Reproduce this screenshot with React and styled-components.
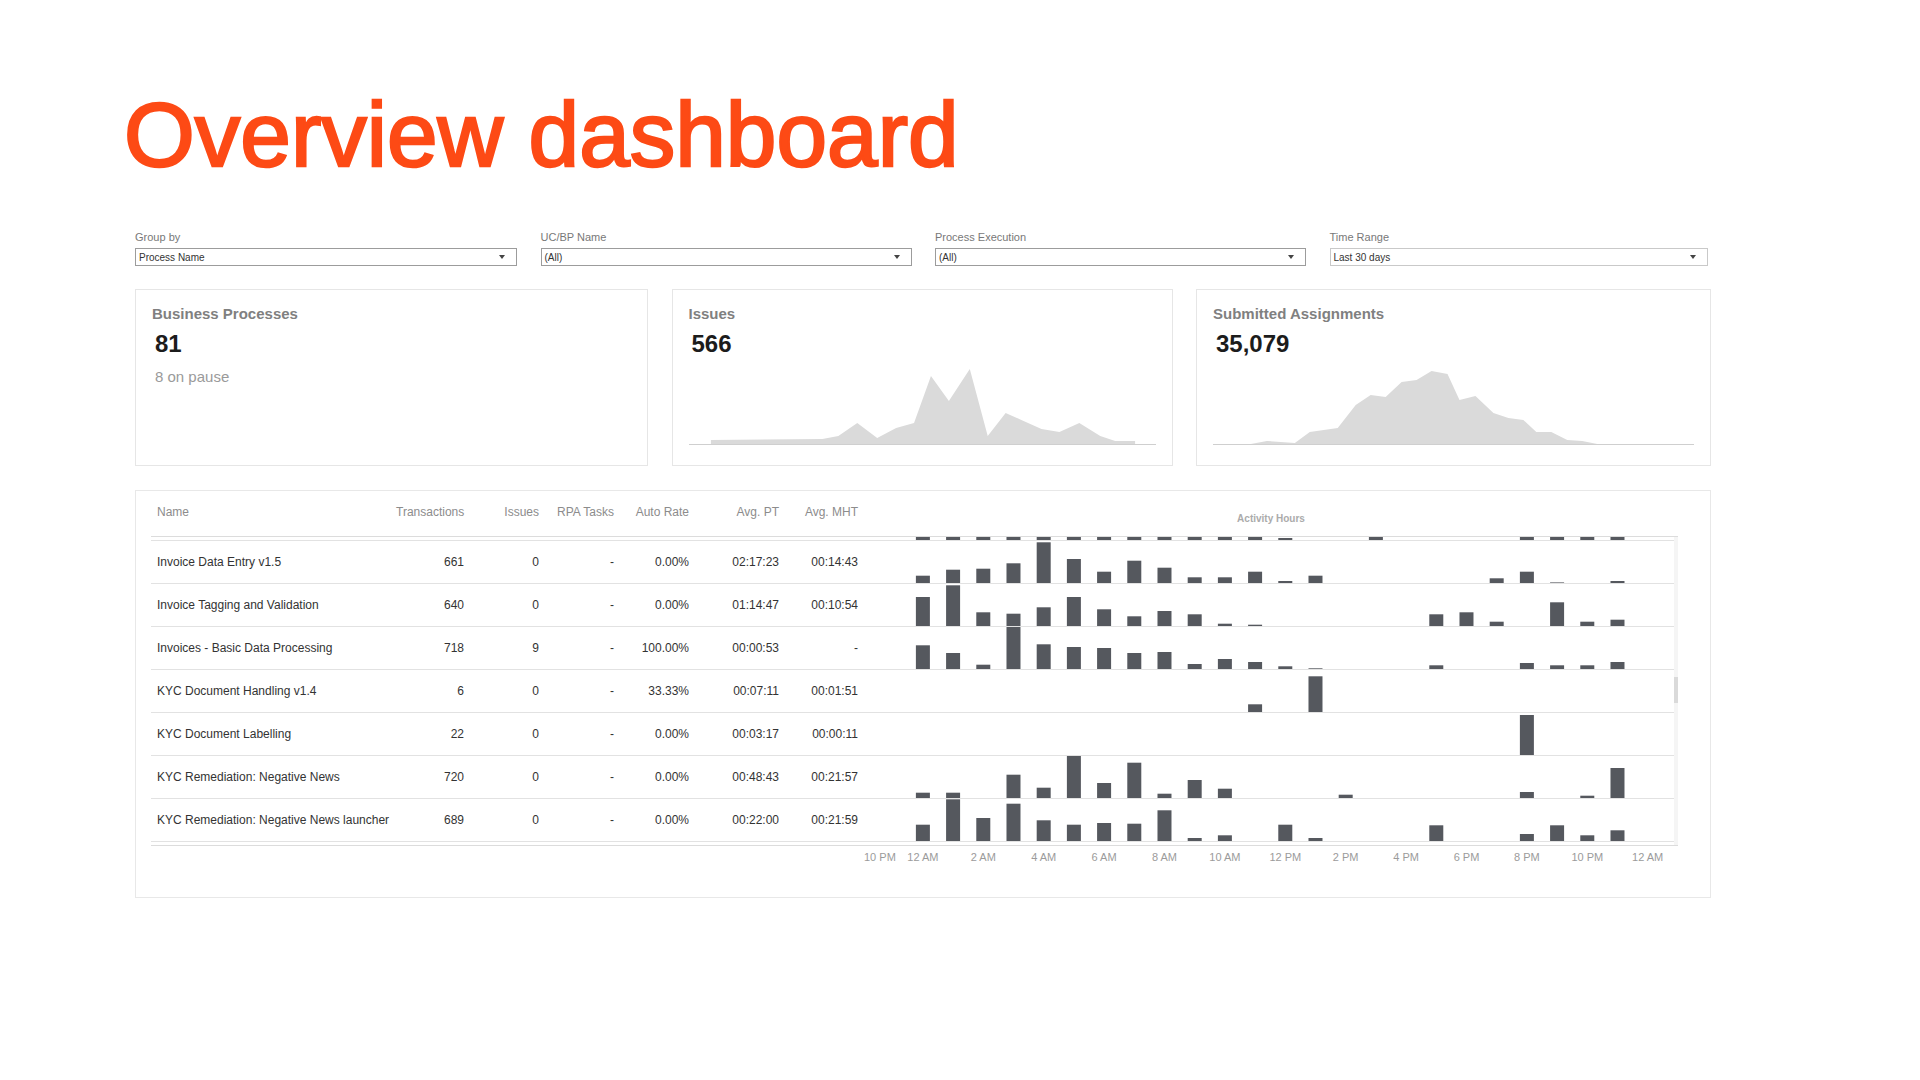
import React from 'react';
import styled, { createGlobalStyle } from 'styled-components';

const GlobalStyle = createGlobalStyle`
  body {
    margin: 0;
    background: #fff;
    font-family: "Liberation Sans", Arial, sans-serif;
  }
`;

const Page = styled.div`
  padding: 89px 0 0 124px;
`;

const Title = styled.h1`
  margin: 0;
  font-size: 91px;
  line-height: 91px;
  font-weight: 400;
  color: #fd4a15;
  -webkit-text-stroke: 2.4px #fd4a15;
`;

const Dashboard = styled.div`
  margin-left: 11px;
  width: 1576px;
  display: flex;
  flex-direction: column;
`;

const FilterBar = styled.div`
  display: grid;
  grid-template-columns: 382px 371px 371px 378px;
  column-gap: 23.5px;
  margin-top: 51px;
`;

const Filter = styled.div`
  display: flex;
  flex-direction: column;
  gap: 4px;
`;

const FilterLabel = styled.div`
  font-size: 11px;
  line-height: 13px;
  color: #787878;
`;

const SelectBox = styled.div`
  height: 18px;
  box-sizing: border-box;
  border: 1px solid ${p => (p.$light ? '#c9c9c9' : '#9c9c9c')};
  display: flex;
  align-items: center;
  justify-content: space-between;
  padding: 0 11px 0 3px;
  font-size: 10px;
  color: #333;
`;

const Caret = styled.svg`
  width: 6px;
  height: 4px;
  fill: #444;
`;

const Cards = styled.div`
  display: grid;
  grid-template-columns: 513px 501px 515px;
  column-gap: 23.5px;
  margin-top: 23px;
`;

const Card = styled.div`
  height: 177px;
  box-sizing: border-box;
  border: 1px solid #e6e6e6;
  padding: 15px 16px 0 16px;
  display: flex;
  flex-direction: column;
`;

const CardTitle = styled.div`
  font-size: 15px;
  line-height: 18px;
  font-weight: 700;
  color: #808080;
`;

const CardValue = styled.div`
  margin: 7px 0 0 3px;
  font-size: 24px;
  line-height: 28px;
  font-weight: 700;
  color: #1c1c1c;
`;

const CardNote = styled.div`
  margin: 10px 0 0 3px;
  font-size: 15px;
  line-height: 18px;
  color: #9a9a9a;
`;

const Spark = styled.svg`
  display: block;
  width: 100%;
  height: 80px;
  margin-top: auto;
  margin-bottom: 19px;
`;

const Panel = styled.div`
  margin-top: 24px;
  height: 408px;
  box-sizing: border-box;
  border: 1px solid #e8e8e8;
  padding: 0 32px 0 15px;
`;

const cols = '239px 80px 75px 75px 75px 90px 79px 814px';

const HeaderRow = styled.div`
  display: grid;
  grid-template-columns: ${cols};
  height: 46px;
  box-sizing: border-box;
  border-bottom: 1px solid #dcdcdc;
`;

const HeaderCell = styled.div`
  padding: 14px 6px 0 6px;
  font-size: 12px;
  line-height: 14px;
  color: #8c8c8c;
  text-align: ${p => (p.$right ? 'right' : 'left')};
`;

const ChartHeader = styled.div`
  padding-top: 22px;
  font-size: 10px;
  line-height: 12px;
  font-weight: 700;
  color: #ababab;
  text-align: center;
`;

const Body = styled.div`
  position: relative;
  height: 308px;
  overflow: hidden;
  border-bottom: 1px solid #dcdcdc;
`;

const Rows = styled.div`
  margin-top: -39px;
`;

const Row = styled.div`
  display: grid;
  grid-template-columns: ${cols};
  height: 43px;
  box-sizing: border-box;
  border-bottom: 1px solid #e2e2e2;
`;

const Cell = styled.div`
  align-self: center;
  padding: 0 6px;
  font-size: 12px;
  line-height: 14px;
  color: #333;
  white-space: nowrap;
  text-align: ${p => (p.$right ? 'right' : 'left')};
`;

const Bars = styled.svg`
  display: block;
  grid-column: 8;
  align-self: end;
  width: 814px;
  height: 42px;
`;

const ScrollTrack = styled.div`
  position: absolute;
  top: 0;
  right: 0;
  width: 4px;
  height: 100%;
  background: #f5f5f5;
`;

const ScrollThumb = styled.div`
  position: absolute;
  top: 140px;
  right: 0;
  width: 4px;
  height: 26px;
  background: #dadada;
`;

const Axis = styled.svg`
  display: block;
  margin-left: 713px;
  width: 814px;
  height: 24px;
  font-family: "Liberation Sans", Arial, sans-serif;
  font-size: 11px;
  fill: #9b9b9b;
`;

const SLOT = 30.2;
const cx = h => (h + 1.95) * SLOT;

// first and last entries are the rows scrolled half out of view: only their bars peek in
const rows = [
  { id: 'above', hours: [20, 18, 15, 22, 30, 17, 16, 12, 14, 10, 9, 11, 2, 0, 0, 8, 0, 0, 0, 0, 12, 10, 9, 11] },
  { id: 'r1', name: 'Invoice Data Entry v1.5', tx: '661', issues: '0', rpa: '-', auto: '0.00%', pt: '02:17:23', mht: '00:14:43',
    hours: [7.3, 13.3, 14.3, 19.7, 40.7, 24, 11.3, 22.3, 15.3, 5.7, 5.7, 11.3, 2, 7.3, 0, 0, 0, 0, 0, 4.7, 11.3, 0.6, 0, 2] },
  { id: 'r2', name: 'Invoice Tagging and Validation', tx: '640', issues: '0', rpa: '-', auto: '0.00%', pt: '01:14:47', mht: '00:10:54',
    hours: [29, 40.7, 13.7, 12.3, 18.7, 29, 16.7, 9.7, 15, 11.7, 2.3, 1.3, 0, 0, 0, 0, 0, 11.7, 13.7, 4.3, 0, 23.7, 4.3, 6.3] },
  { id: 'r3', name: 'Invoices - Basic Data Processing', tx: '718', issues: '9', rpa: '-', auto: '100.00%', pt: '00:00:53', mht: '-',
    hours: [23.7, 16, 4.3, 42, 24.7, 22, 21, 16, 17, 5, 10, 7, 2.7, 0.7, 0, 0, 0, 3.7, 0, 0, 6, 3.7, 3.7, 7] },
  { id: 'r4', name: 'KYC Document Handling v1.4', tx: '6', issues: '0', rpa: '-', auto: '33.33%', pt: '00:07:11', mht: '00:01:51',
    hours: [0, 0, 0, 0, 0, 0, 0, 0, 0, 0, 0, 7.7, 0, 35.7, 0, 0, 0, 0, 0, 0, 0, 0, 0, 0] },
  { id: 'r5', name: 'KYC Document Labelling', tx: '22', issues: '0', rpa: '-', auto: '0.00%', pt: '00:03:17', mht: '00:00:11',
    hours: [0, 0, 0, 0, 0, 0, 0, 0, 0, 0, 0, 0, 0, 0, 0, 0, 0, 0, 0, 0, 40, 0, 0, 0] },
  { id: 'r6', name: 'KYC Remediation: Negative News', tx: '720', issues: '0', rpa: '-', auto: '0.00%', pt: '00:48:43', mht: '00:21:57',
    hours: [5.3, 5.3, 0, 23.3, 10.3, 42, 15, 35.3, 4.3, 18, 9.3, 0, 0, 0, 3.3, 0, 0, 0, 0, 0, 6, 0, 2.3, 30] },
  { id: 'r7', name: 'KYC Remediation: Negative News launcher', tx: '689', issues: '0', rpa: '-', auto: '0.00%', pt: '00:22:00', mht: '00:21:59',
    hours: [16.3, 41.7, 23, 37.3, 20.7, 16.3, 18, 17.3, 30.7, 3, 5.7, 0, 16.3, 3, 0, 0, 0, 15.7, 0, 0, 7, 15.7, 5.7, 10.7] },
  { id: 'below', hours: [0, 4, 6, 9, 12, 8, 6, 4, 3, 2, 1, 0, 0, 0, 0, 0, 0, 0, 0, 0, 0, 0, 0, 0] },
];

const issuesPts = '0,78 22,78 22,74 134,73 150,70 169,57 189,72 208,62 226,57 243,10 261,35 282,3 300,70 318,47 336,55 354,63 372,66 392,57 413,70 428,75 448,75 448,78 469,78';
const submittedPts = '0,78 38,78 54,75 82,77 97,66 125,62 143,39 158,29 173,31 189,16 204,14 219,5 235,8 247,34 263,30 281,47 296,52 311,54 324,66 339,66 355,74 370,75 385,78 482,78';

const axisLabels = ['10 PM', '12 AM', '2 AM', '4 AM', '6 AM', '8 AM', '10 AM', '12 PM', '2 PM', '4 PM', '6 PM', '8 PM', '10 PM', '12 AM'];

function Select({ value, light }) {
  return (
    <SelectBox $light={light}>
      <span>{value}</span>
      <Caret viewBox="0 0 6 4"><path d="M0 0h6L3 4z" /></Caret>
    </SelectBox>
  );
}

function Sparkline({ points, width }) {
  return (
    <Spark viewBox={`0 0 ${width} 80`} preserveAspectRatio="none">
      <polygon points={points} fill="#dadada" />
      <line x1="0" y1="78.5" x2={width} y2="78.5" stroke="#cfcfcf" strokeWidth="1" />
    </Spark>
  );
}

function HourBars({ hours }) {
  return (
    <Bars viewBox="0 0 814 42">
      {hours.map((v, h) =>
        v > 0 ? <rect key={h} x={cx(h) - 7} y={42 - v} width="14" height={v} fill="#55585e" /> : null
      )}
    </Bars>
  );
}

export default function App() {
  return (
    <Page>
      <GlobalStyle />
      <Title>Overview dashboard</Title>
      <Dashboard>
        <FilterBar>
          <Filter><FilterLabel>Group by</FilterLabel><Select value="Process Name" /></Filter>
          <Filter><FilterLabel>UC/BP Name</FilterLabel><Select value="(All)" /></Filter>
          <Filter><FilterLabel>Process Execution</FilterLabel><Select value="(All)" /></Filter>
          <Filter><FilterLabel>Time Range</FilterLabel><Select value="Last 30 days" light /></Filter>
        </FilterBar>

        <Cards>
          <Card>
            <CardTitle>Business Processes</CardTitle>
            <CardValue>81</CardValue>
            <CardNote>8 on pause</CardNote>
          </Card>
          <Card>
            <CardTitle>Issues</CardTitle>
            <CardValue>566</CardValue>
            <Sparkline points={issuesPts} width={469} />
          </Card>
          <Card>
            <CardTitle>Submitted Assignments</CardTitle>
            <CardValue>35,079</CardValue>
            <Sparkline points={submittedPts} width={482} />
          </Card>
        </Cards>

        <Panel>
          <HeaderRow>
            <HeaderCell>Name</HeaderCell>
            <HeaderCell $right>Transactions</HeaderCell>
            <HeaderCell $right>Issues</HeaderCell>
            <HeaderCell $right>RPA Tasks</HeaderCell>
            <HeaderCell $right>Auto Rate</HeaderCell>
            <HeaderCell $right>Avg. PT</HeaderCell>
            <HeaderCell $right>Avg. MHT</HeaderCell>
            <ChartHeader>Activity Hours</ChartHeader>
          </HeaderRow>
          <Body>
            <Rows>
              {rows.map(r => (
                <Row key={r.id}>
                  {r.name && (
                    <>
                      <Cell>{r.name}</Cell>
                      <Cell $right>{r.tx}</Cell>
                      <Cell $right>{r.issues}</Cell>
                      <Cell $right>{r.rpa}</Cell>
                      <Cell $right>{r.auto}</Cell>
                      <Cell $right>{r.pt}</Cell>
                      <Cell $right>{r.mht}</Cell>
                    </>
                  )}
                  <HourBars hours={r.hours} />
                </Row>
              ))}
            </Rows>
            <ScrollTrack />
            <ScrollThumb />
          </Body>
          <Axis viewBox="0 0 814 24">
            {axisLabels.map((l, i) => {
              const h = i * 2 - 2;
              return i === 0
                ? <text key={i} x="0" y="15">{l}</text>
                : <text key={i} x={cx(h)} y="15" textAnchor="middle">{l}</text>;
            })}
          </Axis>
        </Panel>
      </Dashboard>
    </Page>
  );
}
